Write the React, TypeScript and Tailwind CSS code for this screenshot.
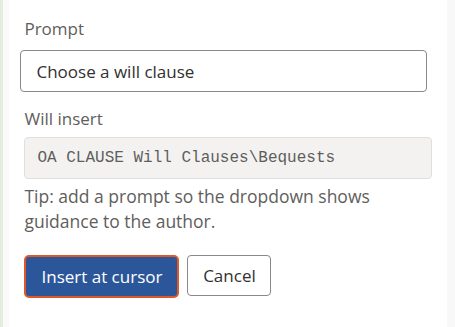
function App() {
  return (
    <div className="flex h-[327px] w-[455px] overflow-hidden bg-white" style={{ fontFamily: '"Open Sans", "Noto Sans", sans-serif' }}>
      <div className="w-[3px] bg-[#e4ecdc]" />
      <div className="w-[7px] bg-[#fafafa]" />
      <div className="flex-1 bg-white pl-[15px] pr-[15px]">
        <div className="pt-[18px] text-[17px] leading-[22px] text-[#605e5c]">Prompt</div>
        <input
          type="text"
          defaultValue="Choose a will clause"
          className="mt-[10px] ml-[-4px] block h-[42px] w-[407px] rounded-[4px] border border-[#8a8886] bg-white px-[15px] text-[17px] text-[#323130] outline-none"
        />
        <div className="mt-[16px] text-[17px] leading-[22px] text-[#605e5c]">Will insert</div>
        <div className="mt-[7px] flex h-[42px] w-[408px] items-center rounded-[4px] border border-[#e1dfdd] bg-[#f3f2f1] px-[12px] text-[16px] text-[#605e5c]" style={{ fontFamily: '"Liberation Mono", monospace' }}>
          OA CLAUSE Will Clauses\Bequests
        </div>
        <p className="mt-[5px] w-[408px] text-[17.5px] leading-[24.5px] text-[#605e5c]">
          Tip: add a prompt so the dropdown shows guidance to the author.
        </p>
        <div className="mt-[22px] flex gap-[8px]">
          <button className="h-[43px] w-[155px] rounded-[5px] border-[2px] border-[#e0572a] bg-[#2b579a] text-[17px] text-white">
            Insert at cursor
          </button>
          <button className="h-[41px] w-[84px] rounded-[4px] border border-[#8a8886] bg-white text-[17px] text-[#323130]">
            Cancel
          </button>
        </div>
      </div>
      <div className="w-[8px] bg-[#f8f8f8]" />
    </div>
  );
}

export default App;
